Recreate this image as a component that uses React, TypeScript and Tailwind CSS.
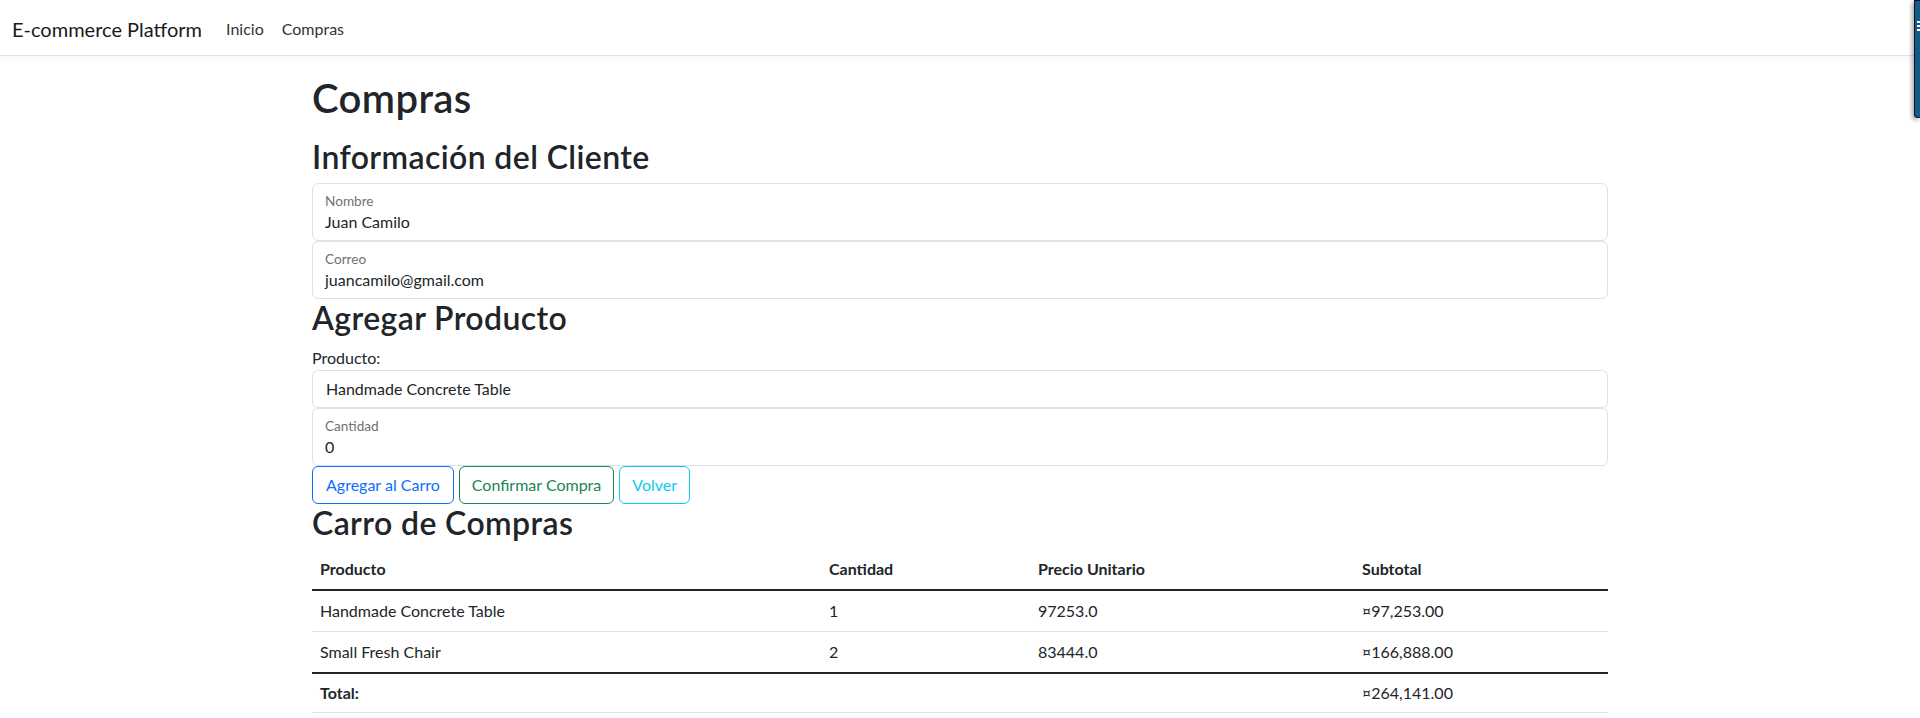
import React from "react";

const font = { fontFamily: '"Lato", "Liberation Sans", sans-serif' };

function FloatingField({ label, value }: { label: string; value: string }) {
  return (
    <div className="flex h-[58px] flex-col rounded-[6px] border border-[#dee2e6] bg-white pl-[12px] pt-[8px]">
      <span className="text-[13.6px] leading-[18px] text-[#6f7276]">{label}</span>
      <span className="text-[16px] leading-[24px] text-[#212529]">{value}</span>
    </div>
  );
}

export default function App() {
  const rows = [
    { p: "Handmade Concrete Table", c: "1", u: "97253.0", s: "¤97,253.00" },
    { p: "Small Fresh Chair", c: "2", u: "83444.0", s: "¤166,888.00" },
  ];
  return (
    <div className="relative min-h-[718px] bg-white text-[#212529]" style={font}>
      <nav className="flex h-[56px] items-center border-b border-[#dee2e6] bg-white px-[12px] pt-[2px] shadow-[0_2px_8px_rgba(0,0,0,0.04)]">
        <span className="mr-[16px] text-[20px] leading-[30px] text-[#1a1a1a]">E-commerce Platform</span>
        <span className="px-[8px] text-[16px] leading-[24px] text-[#333]">Inicio</span>
        <span className="pl-[10px] pr-[8px] text-[16px] leading-[24px] text-[#333]">Compras</span>
      </nav>

      <main className="mx-auto w-full max-w-[1320px] px-[12px] pt-[18px]">
        <h1 className="mb-[16px] text-[40px] font-semibold leading-[48px] tracking-[0.01em]">Compras</h1>

        <h2 className="mb-[7px] text-[32px] font-semibold leading-[38.4px] tracking-[0.012em]">
          Información del Cliente
        </h2>
        <FloatingField label="Nombre" value="Juan Camilo" />
        <FloatingField label="Correo" value="juancamilo@gmail.com" />

        <h2 className="mb-[8px] text-[32px] font-semibold leading-[38.4px] tracking-[0.012em]">Agregar Producto</h2>
        <div className="text-[16px] leading-[24px]">Producto:</div>
        <div className="flex h-[38px] items-center rounded-[6px] border border-[#dee2e6] pl-[13px] text-[16px] leading-[24px]">
          Handmade Concrete Table
        </div>
        <FloatingField label="Cantidad" value="0" />

        <div className="flex gap-[5px]">
          <button className="h-[38px] rounded-[6px] border border-[#0d6efd] px-[13px] text-[16px] leading-[24px] text-[#0d6efd]">
            Agregar al Carro
          </button>
          <button className="h-[38px] rounded-[6px] border border-[#198754] px-[12px] text-[16px] leading-[24px] text-[#198754]">
            Confirmar Compra
          </button>
          <button className="h-[38px] rounded-[6px] border border-[#0dcaf0] px-[12px] text-[16px] leading-[24px] text-[#0dcaf0]">
            Volver
          </button>
        </div>

        <h2 className="mb-[7px] text-[32px] font-semibold leading-[38.4px] tracking-[0.012em]">Carro de Compras</h2>
        <table className="w-full table-fixed border-separate border-spacing-0 text-left text-[16px] leading-[24px]">
          <colgroup>
            <col className="w-[509px]" />
            <col className="w-[209px]" />
            <col className="w-[324px]" />
            <col />
          </colgroup>
          <thead>
            <tr>
              {["Producto", "Cantidad", "Precio Unitario", "Subtotal"].map((h) => (
                <th key={h} className="border-b-2 border-[#212529] px-[8px] py-[8px] font-bold">
                  {h}
                </th>
              ))}
            </tr>
          </thead>
          <tbody>
            {rows.map((r, i) => (
              <tr key={r.p}>
                {[r.p, r.c, r.u, r.s].map((v, j) => (
                  <td
                    key={j}
                    className={
                      i === rows.length - 1
                        ? "px-[8px] py-[8px]"
                        : "border-b border-[#dee2e6] px-[8px] py-[8px]"
                    }
                  >
                    {v}
                  </td>
                ))}
              </tr>
            ))}
          </tbody>
          <tfoot>
            <tr>
              <td className="border-t-2 border-b border-t-[#212529] border-b-[#dee2e6] px-[8px] py-[7px] font-bold">Total:</td>
              <td className="border-t-2 border-b border-t-[#212529] border-b-[#dee2e6] px-[8px] py-[7px]"></td>
              <td className="border-t-2 border-b border-t-[#212529] border-b-[#dee2e6] px-[8px] py-[7px]"></td>
              <td className="border-t-2 border-b border-t-[#212529] border-b-[#dee2e6] px-[8px] py-[7px]">¤264,141.00</td>
            </tr>
          </tfoot>
        </table>
      </main>

      <div className="absolute right-0 top-0 flex h-[118px] w-[6px] flex-col gap-[2px] rounded-bl-[4px] border border-r-0 border-[#111] bg-[#0f5b8c] pl-[2px] pt-[20px] shadow-[-2px_2px_4px_rgba(0,0,0,0.35)]">
        <span className="h-[2px] w-[3px] bg-white" />
        <span className="h-[2px] w-[3px] bg-white" />
        <span className="h-[2px] w-[3px] bg-white" />
      </div>
    </div>
  );
}
